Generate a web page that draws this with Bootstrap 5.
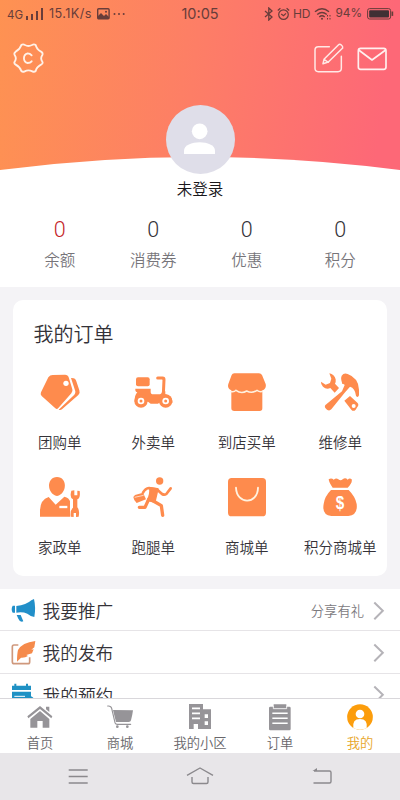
<!DOCTYPE html>
<html lang="zh-CN">
<head>
<meta charset="utf-8">
<meta name="viewport" content="width=device-width, initial-scale=1">
<title>我的</title>
<link href="https://cdn.jsdelivr.net/npm/bootstrap@5.3.0/dist/css/bootstrap.min.css" rel="stylesheet">
<style>
body{font-family:"Noto Sans CJK SC",sans-serif;font-weight:350;background:#f4f3f6;color:#343238;height:800px;overflow:hidden;line-height:1}
svg{display:block;flex:none}
.hero{height:171px;background:linear-gradient(97deg,#fe9252 0%,#fd7e66 48%,#fd6877 94%)}
.hero-curve{left:0;bottom:0;width:100%;height:15px}
.status{height:28px;font-size:13px;font-weight:400;color:#683d3a;padding:0 6px 0 7px;font-family:Inter,sans-serif}
.status .clock{left:0;right:0;text-align:center;font-size:14.5px}
.net{font-size:11.5px}
.speed{font-size:12.7px;width:44px;margin-left:5px;white-space:nowrap;letter-spacing:.4px}
.tools{height:60px;padding:0 13px 0 12px}
.avatar{width:69px;height:69px;left:165.5px;top:104.5px;background:#dfdee9}
.profile{height:116px;padding:0 13px}
.nick{font-size:15.5px;height:35px;color:#19171b}
.num{font-size:21.5px;height:47px;font-family:Roboto,sans-serif;font-weight:300}
.cap{font-size:15.5px;color:#77757a;height:20px;margin-top:-1px}
.orders{margin:13px 13px 0;height:276px;border-radius:10px}
.orders h1{font-size:20px;font-weight:350;padding:23.5px 0 0 20.5px;height:68px;margin:0;line-height:20px}
.cell{height:105.3px;font-size:14.5px;white-space:nowrap}
.cell svg{width:48px;height:48px;fill:#fe8b4d}
.cell span{margin-top:18px;line-height:15px}
.menu{margin-top:13px;height:109px}
.entry{height:42.4px;padding:2px 15px 0 11px;border-bottom:1px solid #e6e4e7;font-size:17.7px}
.entry span{margin-left:6.5px}
.entry small{font-size:13.3px;color:#7c7a7e}
.tabs{height:55px;border-top:1px solid #d9d7db;font-size:13.3px;color:#69676b}
.tabs svg{width:30px;height:30px;fill:#969498;margin-top:3px}
.tabs span{margin-top:4px;line-height:14px}
.tabs .on{color:#e8a628}
.sysbar{height:47px;background:#e8e6e9;padding:0 17px}
</style>
<script src="https://cdn.jsdelivr.net/npm/bootstrap@5.3.0/dist/js/bootstrap.bundle.min.js"></script>
</head>
<body class="d-flex flex-column">
<header class="hero position-relative flex-shrink-0">
  <div class="status d-flex align-items-center justify-content-between position-relative">
    <div class="d-flex align-items-center">
      <span class="net pt-1">4G</span>
      <svg style="margin-left:3px" width="18" height="13" fill="currentColor"><path d="M0 8h2v4H0zM5 6h2v6H5zM10 3h2v9h-2zM15 0h2v12h-2z"/></svg>
      <span class="speed">15.1K/s</span>
      <svg class="ms-1" width="13" height="12" viewBox="0 0 13 12"><rect x=".7" y=".8" width="11.4" height="10" rx="1" fill="none" stroke="currentColor" stroke-width="1.4"/><path d="M1 10V8l3-3 3 3 2-2 3 3v2H1z" fill="currentColor"/><circle cx="9" cy="3.7" r="1" fill="currentColor"/></svg>
      <svg style="margin-left:3px" width="13" height="4" fill="currentColor"><circle cx="1.500" cy="2" r="1"/><circle cx="6" cy="2" r="1"/><circle cx="10.700" cy="2" r="1"/></svg>
    </div>
    <span class="clock position-absolute">10:05</span>
    <div class="d-flex align-items-center">
      <svg width="10" height="14" viewBox="0 0 10 14" fill="none" stroke="currentColor" stroke-width="1.3"><path d="M1 4l7 6-3.200 3V1L8 4l-7 6"/></svg>
      <svg style="margin-left:3px" width="13" height="14" viewBox="0 0 13 14" fill="none" stroke="currentColor" stroke-width="1.2"><circle cx="6.500" cy="7.600" r="4.800"/><path d="M.8 3.500l2.600-2.300M12.200 3.500L9.600 1.200M4.200 7l2.300 1.800L9 6.400"/></svg>
      <span style="font-size:12px;margin-left:3px">HD</span>
      <svg style="margin-left:4px" width="18" height="14" viewBox="0 0 18 14" fill="none" stroke="currentColor" stroke-width="1.4"><path d="M1 4.800q7-6 14 0M3.200 7.500q4.800-4 9.600 0M5.300 10q2.700-2.300 5.400 0"/><circle cx="8" cy="11.800" r="1" fill="currentColor" stroke="none"/><path d="M13.500 8v1.500M13.500 11v1.500M16 8v1.500M16 11v1.500" stroke-width="1"/></svg>
      <span style="font-size:11.8px;margin-left:3px">94%</span>
      <svg style="margin-left:5px" width="27" height="12" viewBox="0 0 27 12"><rect x=".6" y=".6" width="23" height="10.400" rx="2" fill="none" stroke="currentColor"/><rect x="2.200" y="2.200" width="19.800" height="7.200" rx="1" fill="#3f3034"/><path d="M24.500 3.500h1.700v4.400h-1.700z" fill="currentColor"/></svg>
    </div>
  </div>
  <div class="tools d-flex align-items-center justify-content-between">
    <svg width="32" height="32" viewBox="36 124 96 96" fill="none" stroke="#fff1e7" stroke-width="5.5" stroke-linejoin="round" stroke-linecap="round"><path d="M64 133Q69 129 75 133Q85 139 96 133Q102 129 107 133Q110 146 123 153Q130 157 127 163Q120 173 127 183Q130 188 123 192Q110 199 107 211Q103 215 97 212Q85 206 74 212Q68 215 64 211Q60 199 47 192Q41 188 44 183Q51 173 44 163Q41 157 47 153Q60 146 64 133Z"/><path d="M95 164q-5-6-12-6a15 15 0 0 0 0 29q8 0 12-5"/></svg>
    <div class="d-flex align-items-center">
      <svg width="32" height="32" viewBox="338 124 96 96" fill="none" stroke="#ffe9e6" stroke-width="4.5" stroke-linecap="round" stroke-linejoin="round"><path d="M387 138h-33q-10 0-10 10v55q0 10 10 10h59q10 0 10-10v-36M368 189l3-13 43-43q4-4 9 0t4 9l-43 42zM371 176l13 9"/></svg>
      <svg style="margin-left:12px" width="30" height="32" viewBox="469 124 90 96" fill="none" stroke="#fff0ef" stroke-width="5" stroke-linejoin="round"><rect x="473" y="143" width="83" height="63" rx="7"/><path d="M474 148l40 30 41-30"/></svg>
    </div>
  </div>
  <svg class="hero-curve position-absolute" viewBox="0 0 400 15" preserveAspectRatio="none"><path d="M0 14Q100 1 200 1T400 14V15H0z" fill="#fff"/></svg>
  <div class="avatar rounded-circle position-absolute d-flex justify-content-center">
    <svg width="69" height="69" viewBox="197 42 207 207" fill="#fff"><circle cx="298" cy="121" r="23.500"/><path d="M251 189v-10c0-16 24-25 47-25s46 9 46 25v10z"/></svg>
  </div>
</header>

<section class="profile bg-white flex-shrink-0">
  <div class="nick d-flex align-items-center justify-content-center">未登录</div>
  <div class="row g-0 text-center">
    <div class="col"><div class="num d-flex align-items-center justify-content-center" style="color:#c41f2a">0</div><div class="cap">余额</div></div>
    <div class="col"><div class="num d-flex align-items-center justify-content-center">0</div><div class="cap">消费券</div></div>
    <div class="col"><div class="num d-flex align-items-center justify-content-center">0</div><div class="cap">优惠</div></div>
    <div class="col"><div class="num d-flex align-items-center justify-content-center">0</div><div class="cap">积分</div></div>
  </div>
</section>

<section class="orders bg-white flex-shrink-0">
  <h1>我的订单</h1>
  <div class="row row-cols-4 g-0">
    <div class="cell col d-flex flex-column align-items-center">
      <svg viewBox="48 24 144 144"><path d="M85 52q5-7 13-7l37-1q9 0 11 8l11 36q2 7-3 12l-39 44q-4 5-9 1l-41-37q-5-5-2-11z"/><path d="M153 54q14-1 16 10l9 27q3 8-3 14l-49 43q-5 4-10 1l47-45q4-4 3-10z"/><circle cx="138" cy="70" r="8" fill="#fff"/></svg>
      <span>团购单</span></div>
    <div class="cell col d-flex flex-column align-items-center">
      <svg viewBox="328 24 144 144"><rect x="349" y="52" width="41" height="27" rx="6"/><path d="M414 54h15q4 0 4 5l-2 44" fill="none" stroke="#fe8b4d" stroke-width="9" stroke-linejoin="round" stroke-linecap="round"/><path d="M347 86h46v9q0 8 8 8h16q9 0 10-8l10-1v9q22 4 22 25h-40l-4 3h-22l-8-6h-40q-1-19 8-28-7-1-6-11z"/><circle cx="364" cy="123" r="20"/><circle cx="438" cy="123" r="20"/><g fill="#fff"><circle cx="364" cy="123" r="10"/><circle cx="438" cy="123" r="10"/></g><circle cx="364" cy="123" r="4.500"/><circle cx="438" cy="123" r="4.500"/></svg>
      <span>外卖单</span></div>
    <div class="cell col d-flex flex-column align-items-center">
      <svg viewBox="38 24 144 144"><path d="M72 40h74q6 0 9 5l11 27q3 14-10 19v54q0 8-8 8H72q-9 0-9-8V91q-13-6-9-19l10-27q2-5 8-5z"/><path d="M60 94q10 4 17-3 16 12 32 2 16 9 31-2 8 6 18 3" fill="none" stroke="#fff1df" stroke-width="4.500"/></svg>
      <span>到店买单</span></div>
    <div class="cell col d-flex flex-column align-items-center">
      <svg viewBox="318 24 144 144"><path d="M358 40q15 3 19 18 1 8-2 13l12 13-13 14-13-14q-12 6-22-4-7-7-6-15l14 9 13-5 4-13z"/><path d="M395 47q7-10 18-5 33 12 34 47v17q-4 9-9 1-3-23-18-27l-16 18-40 50q-6 6-13 1l-5-5q-4-6 3-11l47-39 8-19q-2-4-7-3l-3-11q-2-7 1-14z"/><path d="M403 122l17-14 22 20q6 6 0 13l-5 8q-7 7-13 0z"/><circle cx="431" cy="138" r="6" fill="#fff"/></svg>
      <span>维修单</span></div>
    <div class="cell col d-flex flex-column align-items-center">
      <svg viewBox="48 24 144 144"><path d="M111 36c32 0 31 50 0 57-32-7-32-57 0-57z"/><path d="M60 155v-19q1-32 26-40l21 23 26-24q15 4 17 14v46z"/><path d="M154 77q-6 22 5 26v25q-9 7-7 27l9 1v-12h7v12l8-1q4-19-4-28v-24q10-4 7-25l-7-1v14h-9V76z"/><path d="M118 126h24" stroke="#fff" stroke-width="7"/></svg>
      <span>家政单</span></div>
    <div class="cell col d-flex flex-column align-items-center">
      <svg viewBox="328 24 144 144"><circle cx="420" cy="48" r="11"/><path d="M370 83q7-13 18-14l25 5 14 13q7 4 13 0l13-17" fill="none" stroke="#fe8b4d" stroke-width="8" stroke-linecap="round" stroke-linejoin="round"/><path d="M391 69l23 3-9 38-21-4q10-20 7-37z" stroke="#fe8b4d" stroke-width="6" stroke-linejoin="round"/><path d="M387 103l-11 24h-17M401 108l24 14 4 29" fill="none" stroke="#fe8b4d" stroke-width="10" stroke-linecap="round" stroke-linejoin="round"/><path d="M346 90l24-7 9 20-28 11q-9-8-10-18z"/><path d="M345 97l27-6" stroke="#fff" stroke-width="2"/></svg>
      <span>跑腿单</span></div>
    <div class="cell col d-flex flex-column align-items-center">
      <svg viewBox="38 24 144 144"><rect x="53" y="39" width="114" height="115" rx="11"/><path d="M77 68c2 52 65 51 66 0" fill="none" stroke="#fff2e0" stroke-width="5.5" stroke-linecap="round"/></svg>
      <span>商城单</span></div>
    <div class="cell col d-flex flex-column align-items-center">
      <svg viewBox="318 24 144 144"><path d="M356 43q8-6 15 1 8-7 14-1 7 6 13 0 8-7 15 1 6-6 12-1 3 11-12 25h-45q-11-15-12-25zM363 75h53q20 20 24 42 4 33-25 36h-51q-29-3-23-36 3-23 22-42z"/><text transform="translate(390 132) scale(.9 1.1)" text-anchor="middle" font-family="Liberation Sans" font-weight="700" font-size="51" fill="#fff">$</text></svg>
      <span>积分商城单</span></div>
  </div>
</section>

<section class="menu bg-white overflow-hidden flex-shrink-0">
  <div class="entry d-flex align-items-center">
    <svg width="25" height="28" viewBox="33 50 75 84" fill="#218fc9"><path d="M49 77q30-3 45-17l8-4q6 26 1 54-13-3-21-10-14-6-33-3z"/><path d="M38 76h7v21h-7q-6-10 0-21zM50 104h12l8 19q-10 4-15-8z"/></svg>
    <span class="me-auto">我要推广</span><small>分享有礼</small>
    <svg style="margin-left:9px" width="12" height="20" viewBox="0 0 12 20"><path d="M1.300 1.500l8.500 8.300-8.500 8.500" fill="none" stroke="#b5b3b8" stroke-width="2"/></svg>
  </div>
  <div class="entry d-flex align-items-center">
    <svg width="25" height="28" viewBox="33 176 75 84"><path d="M55 194H42q-5 0-5 5v45q0 6 6 6h41q5 0 5-6v-13" fill="none" stroke="#cf987c" stroke-width="5"/><path d="M106 182q-40 5-52 27-3 12-3 35l12-12q12 1 21-5l-5-3 17-5 5-12-7 1 9-7z" fill="#f58a4b"/></svg>
    <span class="me-auto">我的发布</span>
    <svg width="12" height="20" viewBox="0 0 12 20"><path d="M1.300 1.500l8.500 8.300-8.500 8.500" fill="none" stroke="#b5b3b8" stroke-width="2"/></svg>
  </div>
  <div class="entry d-flex align-items-center">
    <svg width="25" height="28" viewBox="33 304 75 84" fill="#1f91c4"><path d="M36 318h7v-6h6v6h29v-6h6v6h9v13H36zM36 336h57v14q8 3 10 10v20H36z"/><path d="M43 350h32" stroke="#fff" stroke-width="3"/></svg>
    <span class="me-auto">我的预约</span>
    <svg width="12" height="20" viewBox="0 0 12 20"><path d="M1.300 1.500l8.500 8.300-8.500 8.500" fill="none" stroke="#b5b3b8" stroke-width="2"/></svg>
  </div>
</section>

<nav class="tabs bg-white row row-cols-5 g-0 flex-shrink-0">
  <div class="col d-flex flex-column align-items-center"><svg viewBox="75 38 90 90"><path d="M82 81l38-31 37 31-3 6-34-28-35 28zM91 89l29-24 28 24v26h-20V95h-16v20H91zM138 52h10v16l-10-8z"/></svg><span>首页</span></div>
  <div class="col d-flex flex-column align-items-center"><svg viewBox="315 38 90 90"><path d="M323 50q10-1 12 7l10 43q2 5 7 5h40" fill="none" stroke="#969498" stroke-width="3.5" stroke-linecap="round"/><path d="M339 62l60 1q-2 16-6 30-1 5-7 5h-38z"/><circle cx="352" cy="112" r="4"/><circle cx="382" cy="112" r="4"/></svg><span>商城</span></div>
  <div class="col d-flex flex-column align-items-center"><svg viewBox="-45 38 90 90"><path d="M-33 44H9v16h24v59H-33z"/><path d="M-24 57H0M-24 72H0M-24 87H0" stroke="#fff" stroke-width="5"/><path d="M-19 104h13v15h-13zM14 75h10v11H14zM14 96h10v11H14z" fill="#fff"/></svg><span>我的小区</span></div>
  <div class="col d-flex flex-column align-items-center"><svg viewBox="195 38 90 90"><path d="M211 52h10v-7h38v7h9q4 0 4 4v63q0 4-4 4h-57q-4 0-4-4V56q0-4 4-4z"/><path d="M220 50v8h40v-8" fill="none" stroke="#fff" stroke-width="2.500"/><path d="M217 72h46M217 87h46M217 102h46" fill="none" stroke="#fff" stroke-width="4.500"/></svg><span>订单</span></div>
  <div class="on col d-flex flex-column align-items-center"><svg viewBox="435 38 90 90"><circle cx="480" cy="83" r="38.500" fill="#fc9d0c"/><g fill="#fff"><circle cx="480" cy="74" r="13"/><path d="M460 117q-4-28 20-28t20 28q-20 8-40 0z"/></g></svg><span>我的</span></div>
</nav>

<footer class="sysbar d-flex justify-content-around flex-shrink-0 align-items-center">
  <svg width="30" height="24" viewBox="0 0 30 24" stroke="#8b898d" stroke-width="1.4"><path d="M5.700 5h19M5.700 11.500h19M5.700 18h19"/></svg>
  <svg width="30" height="24" viewBox="0 0 30 24" fill="none" stroke="#8b898d" stroke-width="1.4" stroke-linejoin="round"><path d="M2 10.300L15 3l13 7.300M7 12v5q0 1.500 1.500 1.500h13Q23 18.500 23 17v-5"/></svg>
  <svg width="30" height="24" viewBox="0 0 30 24" fill="none" stroke="#8b898d" stroke-width="1.4"><path d="M6.500 18h16q1.500 0 1.500-1.500V7.500Q24 6 22.500 6H7"/><path d="M5.500 6L10 3v3z" fill="#8b898d" stroke="none"/></svg>
</footer>
</body>
</html>
